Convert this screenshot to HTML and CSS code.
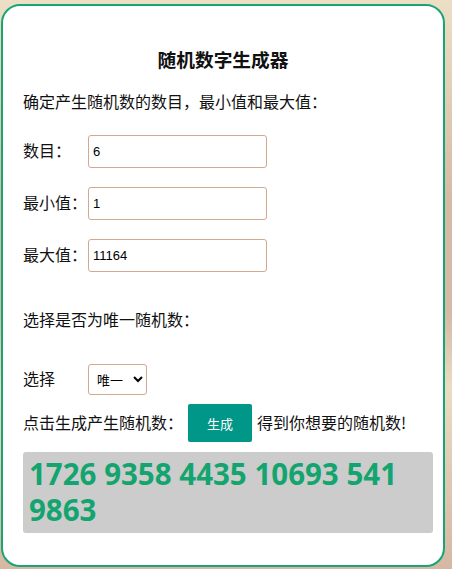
FILE: index.html
```html
<!DOCTYPE html>
<html lang="zh">
<head>
<meta charset="utf-8">
<title>随机数字生成器</title>
<link rel="stylesheet" href="styles.css">
</head>
<body>
<div class="card">
  <h3 class="title">随机数字生成器</h3>
  <p class="intro">确定产生随机数的数目，最小值和最大值：</p>
  <div class="fields">
    <div class="row"><span class="label">数目：</span><input class="field" type="text" value="6"></div>
    <div class="row"><span class="label">最小值：</span><input class="field" type="text" value="1"></div>
    <div class="row"><span class="label">最大值：</span><input class="field" type="text" value="11164"></div>
  </div>
  <p class="question">选择是否为唯一随机数：</p>
  <div class="row select-row">
    <span class="label">选择</span>
    <select class="choice"><option>唯一</option><option>不唯一</option></select>
  </div>
  <div class="gen-row">
    <span>点击生成产生随机数：</span>
    <button class="gen" type="button">生成</button>
    <span>得到你想要的随机数!</span>
  </div>
  <div class="result">1726 9358 4435 10693 541 9863</div>
</div>
</body>
</html>
```
FILE: styles.css
```css
html, body {
  margin: 0;
  height: 100%;
}
body {
  background: linear-gradient(to bottom, #ecdfc6 0%, #d7baa6 35%, #d6b9a6 55%, #eadcc3 68%, #dcc2ae 90%, #d6b8a4 100%);
  padding: 4px 0 0 1px;
  box-sizing: border-box;
  font-family: "Noto Sans CJK SC", "Noto Sans", sans-serif;
  color: #111;
  overflow: hidden;
}
.card {
  width: 444px;
  height: 563px;
  box-sizing: border-box;
  background: #fff;
  border: 2px solid #17a673;
  border-radius: 19px;
  padding: 0 10px 0 20px;
  font-size: 16px;
}
.title {
  margin: 41px 0 0 -10px;
  font-size: 18.72px;
  line-height: 24px;
  font-weight: bold;
  text-align: center;
}
.intro {
  margin: 18px 0 0;
  line-height: 24px;
}
.fields {
  margin-top: 22px;
  display: flex;
  flex-direction: column;
  gap: 19px;
}
.row {
  display: flex;
  align-items: center;
}
.label {
  width: 65px;
  flex: none;
  line-height: 24px;
  padding-bottom: 3px;
}
.field {
  width: 179px;
  height: 33px;
  box-sizing: border-box;
  border: 1px solid #d3a892;
  border-radius: 3px;
  padding: 0 4px;
  font-family: "Liberation Sans", Arial, sans-serif;
  font-size: 13px;
  color: #000;
  margin: 0;
}
.question {
  margin: 35px 0 0;
  line-height: 24px;
}
.select-row {
  margin-top: 33px;
}
.choice {
  width: 59px;
  height: 31px;
  box-sizing: border-box;
  border: 1px solid #d3a892;
  border-radius: 3px;
  background: #fff;
  font-family: "Noto Sans CJK SC", sans-serif;
  font-size: 13px;
  color: #000;
  padding: 0 2px 0 4px;
  margin: 0;
}
.gen-row {
  margin-top: 9px;
  display: flex;
  align-items: center;
  line-height: 24px;
}
.gen-row span {
  padding-bottom: 2px;
}
.gen {
  width: 64px;
  height: 38px;
  margin: 0 5px;
  border: none;
  border-radius: 2px;
  background: #009688;
  color: #fff;
  font-family: "Noto Sans CJK SC", sans-serif;
  font-size: 13px;
  padding: 0;
}
.result {
  margin-top: 10px;
  width: 410px;
  height: 81px;
  box-sizing: border-box;
  background: #cccccc;
  border-radius: 3px;
  padding: 4px 6px;
  font-family: "Open Sans", sans-serif;
  font-weight: bold;
  font-size: 29.5px;
  line-height: 36px;
  color: #13a46f;
}
```
